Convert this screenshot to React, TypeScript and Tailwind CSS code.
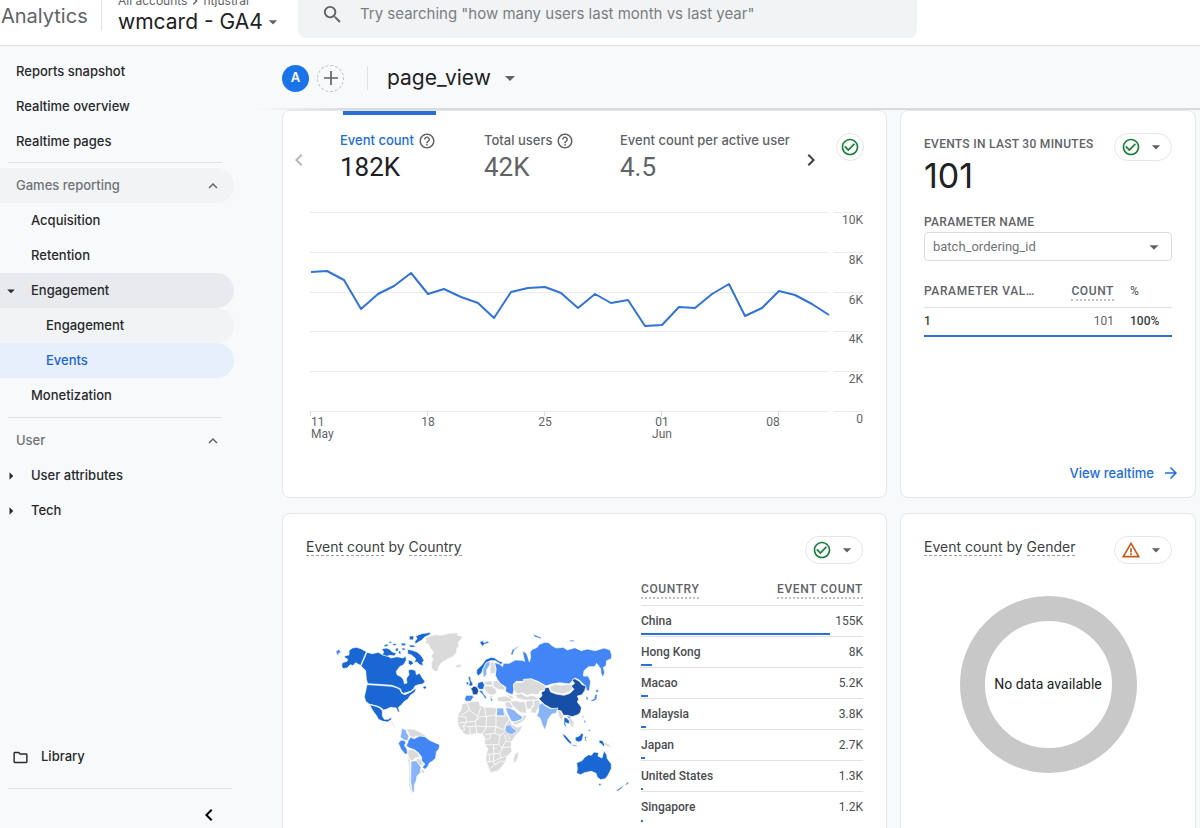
import type { ReactNode } from "react";
import {
  MdArrowDropDown,
  MdArrowForward,
  MdArrowRight,
  MdCheckCircleOutline,
  MdChevronLeft,
  MdChevronRight,
  MdExpandLess,
  MdHelpOutline,
  MdOutlineFolder,
  MdSearch,
  MdWarningAmber,
} from "react-icons/md";

const SANS = "font-['Inter',sans-serif]";
const ROBOTO = "font-['Roboto',sans-serif]";

function NavItem({ label, level = 0, state = "", caret }: { label: string; level?: number; state?: string; caret?: "down" | "right" }) {
  const pad = ["pl-4", "pl-[31px]", "pl-[46px]"][level];
  return (
    <a href="#" className={`relative flex h-[35px] items-center rounded-r-full ${pad} ${state}`}>
      {caret === "down" && <MdArrowDropDown className="absolute left-0.5 size-[18px]" />}
      {caret === "right" && <MdArrowRight className="absolute left-0.5 size-[18px]" />}
      {label}
    </a>
  );
}

function NavGroup({ label, state = "" }: { label: string; state?: string }) {
  return (
    <button type="button" aria-expanded="true" className={`flex h-[35px] w-full items-center justify-between rounded-r-full pr-3 pl-4 text-[#6f7378] ${state}`}>
      {label}
      <MdExpandLess className="size-[18px] text-[#5f6368]" />
    </button>
  );
}

function Sidebar() {
  return (
    <nav aria-label="Reports" className="flex w-[234px] shrink-0 flex-col pt-2 text-[13px] font-medium text-[#27292c]">
      <NavItem label="Reports snapshot" />
      <NavItem label="Realtime overview" />
      <NavItem label="Realtime pages" />
      <hr className="mx-2 mt-[3px] mb-[5px] w-[214px] border-[#dfe1e5]" />
      <NavGroup label="Games reporting" state="bg-[#f1f3f4]" />
      <NavItem label="Acquisition" level={1} />
      <NavItem label="Retention" level={1} />
      <NavItem label="Engagement" level={1} state="bg-[#e8eaed]" caret="down" />
      <NavItem label="Engagement" level={2} state="bg-[#f1f3f4]" />
      <NavItem label="Events" level={2} state="bg-[#e6effb] text-[#1a67d2]" />
      <NavItem label="Monetization" level={1} />
      <hr className="mx-2 mt-1 mb-[5px] w-[214px] border-[#dfe1e5]" />
      <NavGroup label="User" />
      <NavItem label="User attributes" level={1} caret="right" />
      <NavItem label="Tech" level={1} caret="right" />
      <div className="mt-auto">
        <a href="#" className="flex h-9 items-center gap-3 pl-3">
          <MdOutlineFolder className="size-[17px]" />
          Library
        </a>
        <div className="mt-[13px] mr-0.5 ml-2 flex h-10 items-center justify-end border-t border-[#dfe1e5] pt-3 pr-[11px]">
          <button type="button" aria-label="Collapse navigation">
            <MdChevronLeft className="size-6 text-black" />
          </button>
        </div>
      </div>
    </nav>
  );
}

function Header() {
  return (
    <header className="flex h-[46px] shrink-0 overflow-hidden border-b border-[#dfe1e5] bg-white">
      <div className="flex w-[298px] shrink-0">
        <a href="#" className="flex h-8 w-[101px] items-center pl-px text-[20px] text-[#5f6368]">Analytics</a>
        <div className="h-[31px] border-l border-[#dfe1e5]" />
        <button type="button" className="-mt-2 flex flex-col pl-4 text-left">
          <span className="flex h-[18px] items-center text-[12px] leading-4 text-[#5f6368]">
            All accounts <MdChevronRight className="size-4" /> ntjustrar
          </span>
          <span className="flex h-6 items-center text-[21px] whitespace-nowrap text-[#202124]">
            wmcard - GA4 <MdArrowDropDown className="size-5 text-[#5f6368]" />
          </span>
        </button>
      </div>
      <label className="flex h-[38px] w-[619px] items-center rounded-b-lg bg-[#f1f3f4] pb-[9px] pl-[23px] text-[#5f6368]">
        <MdSearch className="mr-4 size-[23px]" />
        <input
          type="search"
          aria-label="Search"
          placeholder={'Try searching "how many users last month vs last year"'}
          className="min-w-0 flex-1 bg-transparent text-[15px] outline-none placeholder:text-[#7a7e83]"
        />
      </label>
    </header>
  );
}

function Card({ children, label, className = "" }: { children: ReactNode; label: string; className?: string }) {
  return (
    <section aria-label={label} className={`rounded-lg border border-[#e3e6ea] bg-white ${className}`}>
      {children}
    </section>
  );
}

function StatusPill({ warning = false }: { warning?: boolean }) {
  return (
    <button type="button" aria-label={warning ? "Data warning" : "Data quality"} className="flex h-7 w-[58px] shrink-0 items-center justify-between rounded-full border border-[#e3e6ea] pr-[5px] pl-1.5">
      {warning ? <MdWarningAmber className="size-5 text-[#c5591b]" /> : <MdCheckCircleOutline className="size-5 text-[#188038]" />}
      <MdArrowDropDown className="size-5 text-[#5f6368]" />
    </button>
  );
}

const POINTS =
  "1,60 17,59 34,68 51,97 68,82 84,74 101,61 118,82 134,77 151,85 168,91 184,106 201,80 218,76 235,75 251,81 268,96 285,82 301,91 318,88 335,114 352,113 369,95 385,96 402,82 419,72 435,104 452,96 469,79 485,83 502,92 519,103";

const DAYS = [
  { x: 1, day: "11", month: "May", anchor: "start" as const },
  { x: 118, day: "18", month: "", anchor: "middle" as const },
  { x: 235, day: "25", month: "", anchor: "middle" as const },
  { x: 352, day: "01", month: "Jun", anchor: "middle" as const },
  { x: 463, day: "08", month: "", anchor: "middle" as const },
];

function LineChart() {
  return (
    <svg viewBox="0 0 554 232" role="img" aria-label="Event count per day" className={`mt-[25px] w-full ${ROBOTO}`} fontSize="12" fill="#5f6368">
      {["10K", "8K", "6K", "4K", "2K", "0"].map((tick, i) => (
        <g key={tick}>
          <path d={`M0 ${i * 40 + 0.5 - (i > 2 ? 1 : 0)}H519M524 ${i * 40 + 0.5 - (i > 2 ? 1 : 0)}H554`} stroke="#e8eaed" />
          <text x="553" y={i * 40 + 12 - (i > 2 ? 1 : 0)} textAnchor="end">{tick}</text>
        </g>
      ))}
      {[1, 118, 235, 352, 469].map((x) => (
        <path key={x} d={`M${x - 0.5} 199v5`} stroke="#dadce0" />
      ))}
      {DAYS.map((d) => (
        <g key={d.day} textAnchor={d.anchor}>
          <text x={d.x} y="214">{d.day}</text>
          <text x={d.x} y="226">{d.month}</text>
        </g>
      ))}
      <polyline points={POINTS} fill="none" stroke="#3273d6" strokeWidth="2" strokeLinejoin="round" />
    </svg>
  );
}

function Metric({ label, value, active = false, help = false, className = "" }: { label: string; value: string; active?: boolean; help?: boolean; className?: string }) {
  return (
    <button type="button" className={`flex shrink-0 flex-col text-left ${className}`}>
      <span className={`flex h-5 items-center gap-1 text-[13px] font-medium whitespace-nowrap ${active ? "text-[#1a6dd8]" : "text-[#5f6368]"}`}>
        {label}
        {help && <MdHelpOutline className="size-[18px] text-[#5f6368]" />}
      </span>
      <span className={`text-[26px] leading-8 ${ROBOTO} ${active ? "text-[#202124]" : "text-[#5f6368]"}`}>{value}</span>
    </button>
  );
}

function TrendCard() {
  return (
    <Card label="Event trend" className="h-[388px] pr-[22px] pl-[27px]">
      <div className="flex h-[76px]">
        <button type="button" aria-label="Previous metrics" className="mt-[22px] -ml-[23px] self-center">
          <MdChevronLeft className="size-6 text-[#b4b7bb]" />
        </button>
        <div className="ml-[29px] flex min-w-0 flex-1">
          <div className="w-[144px] shrink-0">
            <div className="ml-[3px] h-1 w-[93px] bg-[#2a6dd4]" />
            <Metric label="Event count" value="182K" active help className="mt-4" />
          </div>
          <Metric label="Total users" value="42K" help className="mt-5 w-[136px]" />
          <Metric label="Event count per active user" value="4.5" className="mt-5" />
        </div>
        <button type="button" aria-label="Next metrics" className="mt-[22px] mr-[13px] self-center">
          <MdChevronRight className="size-6 text-[#3c4043]" />
        </button>
        <button type="button" aria-label="Data quality" className="mt-[22px] flex size-7 items-center justify-center rounded-full border border-[#e3e6ea]">
          <MdCheckCircleOutline className="size-5 text-[#188038]" />
        </button>
      </div>
      <LineChart />
    </Card>
  );
}

function RealtimeCard() {
  return (
    <Card label="Events in last 30 minutes" className={`flex flex-col pr-[23px] pl-[23px] text-[12px] text-[#5f6368] ${ROBOTO}`}>
      <div className="mt-[22px] flex items-start justify-between">
        <div>
          <h2 className="mt-[3px] font-medium leading-4 tracking-wide whitespace-nowrap">EVENTS IN LAST 30 MINUTES</h2>
          <p className={`mt-0.5 text-[34px] leading-[44px] text-[#202124] ${SANS}`}>101</p>
        </div>
        <StatusPill />
      </div>
      <label htmlFor="parameter" className="mt-4 block font-medium leading-4 tracking-wide">PARAMETER NAME</label>
      <div className="relative mt-0.5">
        <select id="parameter" className="h-[29px] w-full appearance-none rounded-sm border border-[#dadce0] bg-white px-2 text-[13px] text-[#6f7378]">
          <option>batch_ordering_id</option>
        </select>
        <MdArrowDropDown className="pointer-events-none absolute top-1 right-[7px] size-[22px]" />
      </div>
      <table className="mt-[22px] w-full table-fixed">
        <thead>
          <tr className="h-6 border-b border-[#dfe1e5] align-top tracking-wider">
            <th scope="col" className="truncate text-left font-medium leading-4">PARAMETER VAL…</th>
            <th scope="col" className="w-[70px] text-right font-medium leading-4">
              <span className="inline-block border-b-2 border-dotted border-[#bdc1c6] leading-4">COUNT</span>
            </th>
            <th scope="col" className="w-[58px] pl-4 text-left font-medium leading-4">%</th>
          </tr>
        </thead>
        <tbody>
          <tr className="h-[29px] border-b-2 border-[#2a72d8]">
            <td className="font-medium text-[#3c4043]">1</td>
            <td className="text-right">101</td>
            <td className="pl-4 font-medium text-[#3c4043]">100%</td>
          </tr>
        </tbody>
      </table>
      <a href="#" className={`mt-auto -mr-2 mb-3.5 flex items-center gap-2 self-end text-[13px] font-medium text-[#1a6dd8] ${SANS}`}>
        View realtime <MdArrowForward className="size-[18px]" />
      </a>
    </Card>
  );
}

const NAVY = "#174ea6";
const DEEP = "#1967d2";
const BLUE = "#4285f4";
const LIGHT = "#8ab4f8";
const NONE = "#dadada";

const WEST: [string, string][] = [
  [DEEP, "M72 92L82 84 95 82 108 86 124 95 107 136 100 133 92 128 84 137 76 134 66 144 54 146 50 138 52 128 66 124 68 118 58 112 60 107 72 105Z"],
  [BLUE, "M33 94l9-6 6 9-8 4 2 8-7-6z"],
  [DEEP, "M126 97L142 101 160 97 172 104 184 106 198 114 216 110 234 114 242 108 244 120 236 134 224 140 214 154 216 164 228 170 236 180 238 191 246 189 244 176 252 164 250 150 260 148 272 152 274 164 284 160 292 174 300 184 294 192 280 194 270 198 266 206 256 214 236 220 230 216 226 206 212 200 200 196 160 193 128 191 124 178 122 152 108 138Z"],
  [DEEP, "M293 201l8-4 4 7-8 4z"],
  [DEEP, "M170 87l14-3 10 4 8 8 12 3-6 9-14-2-8 3-14-5 4-8z"],
  [DEEP, "M176 76l10-4 6 4-12 5zM193 64l8 1-2 5-7-1zM203 72l10-2 2 5-10 2zM211 84l9 1 0 9-8 0zM228 69l14 1 0 7-12 0zM219 92l8 2 1 10-7-4zM230 84l9 0 2 7-9-1zM253 48l14 0-2 12-12-1z"],
  [DEEP, "M252 75l14 0 6 6-16 1zM248 88L262 91 276 96 286 104 292 112 297 122 292 127 295 137 284 134 276 126 268 128 272 116 258 104 248 102Z"],
  [DEEP, "M250 120l10 2 6 9-10 5-6-6z"],
  [DEEP, "M269 66L276 56 272 48 290 41 318 37 314 44 298 52 290 61 280 66 272 72Z"],
  [NONE, "M298 55L314 49 330 44 348 46 372 40 402 38 396 45 414 50 408 58 400 68 402 80 396 84 394 98 384 110 366 118 350 128 342 138 338 154 328 154 320 144 318 130 324 118 318 108 326 98 314 82 310 72 298 68 306 60Z"],
  [NONE, "M390 137l14-4 8 4-10 6-10-1z"],
  [DEEP, "M126 194L160 196 200 199 214 203 224 208 230 220 240 224 256 217 268 208 274 204 270 216 256 226 248 238 238 244 230 254 220 262 224 277 218 275 214 264 196 262 184 268 176 270 166 262 156 258 132 252 122 244 118 230Z"],
  [DEEP, "M134 254L156 260 164 264 172 272 172 288 178 298 190 298 198 292 200 298 188 306 174 304 160 298 154 286 146 276 140 266Z"],
  [NONE, "M194 305l10 3 6 10 4 6-8-4-4-8-9-3z"],
  [LIGHT, "M230 325L244 330 246 340 252 348 248 362 236 360 226 352 228 340Z"],
  [NONE, "M244 326L268 328 284 336 298 344 304 350 290 350 274 348 262 354 252 346 250 338Z"],
  [BLUE, "M220 370L228 360 240 362 242 370 238 376 246 388 248 402 240 402 228 388Z"],
  [BLUE, "M250 362L256 352 268 356 284 348 300 350 312 360 344 374 342 386 334 396 332 414 322 424 314 428 308 440 300 448 292 442 300 432 290 424 290 412 282 400 270 390 254 384 244 378Z"],
  [NONE, "M250 390L264 388 280 400 284 412 270 414 264 422 254 420 248 402Z"],
  [NONE, "M278 414l10 4 4 10 2 8-8 2-12-14z"],
  [NONE, "M247 404L255 422 256 460 258 500 262 516 268 524 258 518 252 498 252 450Z"],
  [LIGHT, "M258 424L274 422 284 436 288 442 286 458 276 468 274 482 268 494 268 516 262 516 257 486Z"],
  [NONE, "M289 446l10 6-2 8-8-2z"],
];

const EAST: [string, string][] = [
  [DEEP, "M89 65l12-3 0 6 12-4 5 4-16 5-3 7-7-8z"],
  [BLUE, "M250 43l12 4 14 6-4 3-20-6zM358 61l14-1 0 5-12 0z"],
  [BLUE, "M182 104l4-14 14-9 10-4-16 12-6 16z"],
  [BLUE, "M138 148L134 128 148 132 158 140 160 130 178 130 196 120 216 121 224 124 220 108 218 94 228 98 234 112 238 126 242 112 240 96 248 88 262 82 266 74 284 67 296 68 304 76 318 84 340 82 352 90 374 83 394 92 412 87 436 92 462 84 480 90 485 104 484 116 470 122 468 138 460 142 464 158 459 172 453 160 452 146 440 130 434 140 416 140 402 152 400 168 414 168 422 184 418 212 410 212 406 198 388 180 374 174 366 184 358 192 330 188 304 192 288 198 264 184 244 178 224 184 198 184 190 194 192 208 188 224 176 220 166 214 168 202 150 190 142 178 136 166Z"],
  [DEEP, "M80 150L96 134 108 118 124 112 134 114 148 124 158 126 154 134 136 122 120 122 108 130 100 144 94 160 84 168 80 160Z"],
  [LIGHT, "M98 150L108 128 120 124 120 134 110 150 110 164 100 174Z"],
  [NONE, "M122 126L132 126 138 146 136 160 120 162 120 146Z"],
  [DEEP, "M54 170l7 0 2 12 6 10-2 6-12-1 4-9zM49 186l7 0-1 8-7 0z"],
  [DEEP, "M84 188L98 184 104 196 100 208 88 208 82 200Z"],
  [NAVY, "M62 206L72 198 82 202 86 212 82 224 68 224 66 212Z"],
  [BLUE, "M48 226L68 226 70 232 62 244 48 244 44 238Z"],
  [BLUE, "M86 212l10-2 6 12 8 10-4 6-8-14zM124 232l5 10-5 2-4-9z"],
  [NONE, "M102 186L116 182 128 184 128 196 106 196ZM130 182L142 182 152 192 166 202 164 210 144 208 128 198ZM102 198L126 198 138 208 140 220 126 226 116 222 104 210ZM116 226l12 2-2 7-6-2z"],
  [NONE, "M140 232L166 228 184 236 186 244 162 246 144 244ZM168 222l18 6 10 8-14 0z"],
  [NONE, "M190 194L198 188 222 186 220 178 244 176 264 186 288 198 284 210 270 214 264 224 244 222 232 226 216 218 200 222 192 208Z"],
  [NONE, "M196 224L212 220 230 230 246 226 262 232 264 240 240 240 222 240 200 234Z"],
  [NONE, "M298 200L316 192 332 196 358 192 372 200 360 214 340 222 318 218 304 212Z"],
  [NAVY, "M266 236L276 228 274 216 284 212 284 204 296 202 302 216 318 222 342 226 360 220 372 208 364 198 374 190 366 180 374 176 388 184 396 194 408 198 404 212 396 224 382 228 386 238 382 246 394 262 392 276 384 284 366 290 352 286 340 286 334 274 320 270 302 264 284 254 276 246Z"],
  [NONE, "M164 248L178 244 190 262 180 266 168 262ZM180 244L196 242 214 246 224 244 230 268 228 280 212 278 200 268 190 260ZM226 244L248 240 250 254 240 268 230 266ZM250 242L268 240 270 252 262 268 258 280 242 278 244 266 252 256Z"],
  [LIGHT, "M266 256L276 248 286 258 302 266 324 264 318 280 306 282 294 298 290 316 284 330 276 312 270 294 260 288 266 274Z"],
  [LIGHT, "M166 264L178 264 192 270 202 280 218 290 214 300 194 306 184 304 174 284Z"],
  [NONE, "M222 284l8 2-4 12-20 14-16 3 0-8 24-8z"],
  [NONE, "M322 272L332 272 340 290 336 302 328 292ZM354 298l8-6 10 16-2 12-6 2-4-12z"],
  [DEEP, "M342 292L350 294 358 302 358 312 346 308 350 326 342 314ZM352 288l10 2-2 5-6-1z"],
  [DEEP, "M336 340L346 346 364 366 364 374 354 366 342 352ZM366 374l14 2 2 3-14-1zM376 352L388 348 396 338 400 344 396 362 386 366 376 362ZM404 350l8-1-4 6 2 10-5-4z"],
  [BLUE, "M402 300l6 2-2 8-4-3zM416 328l6 2-2 5-5-2zM396 288l4-2 0 8-3-1z"],
  [BLUE, "M437 210l7-2 2 7-8 3zM436 222l6 2-2 14-10 6-12 0 14-8zM408 228l6 4 0 10-6-4z"],
  [DEEP, "M448 360l10 2 6 12-2 6-8-8-7-4z"],
  [NONE, "M463 366l12 6 12 10-10-1-13-5zM484 368l8 3-3 4z"],
  [DEEP, "M380 428L396 422 404 412 416 404 424 406 432 396 446 398 444 408 456 414 462 392 470 404 472 416 484 432 484 446 474 466 466 476 452 479 442 472 438 460 424 454 404 458 392 464 380 460 382 446Z"],
  [DEEP, "M446 490l8 1-3 7-4-2z"],
  [BLUE, "M498 512l10-8 12-8-2 6-14 12zM524 496l8-10 6 0-6 8z"],
  [NONE, "M36 252L52 248 70 244 86 244 90 256 104 262 124 262 138 264 162 264 166 280 178 298 186 314 202 322 218 316 210 334 194 350 184 366 184 384 186 394 172 408 166 426 154 442 144 452 122 458 116 444 108 422 108 402 114 388 104 372 104 352 96 342 80 340 60 344 46 344 32 330 22 310 24 284 34 268Z"],
  [LIGHT, "M140 264L160 264 164 288 140 288Z"],
  [LIGHT, "M168 316L182 314 188 324 202 332 186 344 172 340 164 330Z"],
  [NONE, "M190 418L194 404 206 394 204 412 196 428 190 426Z"],
];

const AFRICA_BORDERS =
  "M52 248L58 270 34 286M58 270L84 290 92 262M24 288L48 292 50 306 22 310M84 290L76 304 50 306 40 318 44 330 34 332M76 304L78 318 60 320 60 344M40 318L60 320M78 318L80 340M104 262L108 290 92 290 76 304M108 290L138 284 138 320 110 320 96 342M138 284L140 264M110 290L108 320 80 318M138 288L166 288M138 320L164 330 166 316 178 298M138 320L134 340 104 344M134 340L150 346 164 338M150 346L146 374 104 374M104 358L120 356 120 340M146 374L156 384 184 380M164 344L168 362 184 366M168 362L156 384 150 400 110 404M130 374L132 402 130 424 110 426M150 400L152 414 130 424 134 434 152 424 166 424M152 414L170 408M118 404L118 426M140 384L128 386M172 344L180 358M134 434L122 444";

function WorldMap() {
  return (
    <svg viewBox="0 0 930 540" role="img" aria-label="Event count by country" className="w-[310px]" stroke="#fff" strokeWidth="2" strokeLinejoin="round">
      {WEST.map(([fill, d]) => (
        <path key={d} fill={fill} d={d} />
      ))}
      <g transform="translate(375 0)">
        {EAST.map(([fill, d]) => (
          <path key={d} fill={fill} d={d} />
        ))}
        <path d={AFRICA_BORDERS} fill="none" strokeWidth="2.5" />
      </g>
    </svg>
  );
}

const COUNTRIES = [
  { name: "China", count: "155K", share: 85 },
  { name: "Hong Kong", count: "8K", share: 4.8 },
  { name: "Macao", count: "5.2K", share: 3 },
  { name: "Malaysia", count: "3.8K", share: 2.2 },
  { name: "Japan", count: "2.7K", share: 1.6 },
  { name: "United States", count: "1.3K", share: 0.8 },
  { name: "Singapore", count: "1.2K", share: 0.7 },
];

function CardTitle({ dimension }: { dimension: string }) {
  return (
    <h2 className="mt-0.5 text-[14px] leading-[17px] text-[#3c4043]">
      <span className="inline-block border-b border-dashed border-[#9aa0a6]">Event count</span> by{" "}
      <span className="inline-block border-b border-dashed border-[#9aa0a6]">{dimension}</span>
    </h2>
  );
}

function CountryCard() {
  return (
    <Card label="Event count by Country" className="h-[400px] overflow-hidden pt-[22px] pr-[23px] pl-[23px]">
      <div className="flex items-start justify-between">
        <CardTitle dimension="Country" />
        <StatusPill />
      </div>
      <div className="mt-4 flex justify-between">
        <div className="mt-10 ml-[19px] shrink-0">
          <WorldMap />
        </div>
        <table className={`w-[222px] shrink-0 self-start text-[12px] text-[#4a4d51] ${ROBOTO}`}>
          <thead>
            <tr className="h-[25px] border-b border-[#dfe1e5] align-top tracking-wider text-[#5f6368]">
              <th scope="col" className="text-left font-medium">
                <span className="inline-block border-b-2 border-dotted border-[#bdc1c6] leading-4">COUNTRY</span>
              </th>
              <th scope="col" className="text-right font-medium">
                <span className="inline-block border-b-2 border-dotted border-[#bdc1c6] leading-4">EVENT COUNT</span>
              </th>
            </tr>
          </thead>
          <tbody>
            {COUNTRIES.map((c) => (
              <tr key={c.name} className="relative h-[31px] border-b border-[#dfe1e5] last:border-b-0">
                <th scope="row" className="text-left font-medium">
                  {c.name}
                  <span className="absolute bottom-0 left-0 h-0.5 bg-[#2a72d8]" style={{ width: `${c.share}%` }} />
                </th>
                <td className="text-right">{c.count}</td>
              </tr>
            ))}
          </tbody>
        </table>
      </div>
    </Card>
  );
}

function GenderCard() {
  return (
    <Card label="Event count by Gender" className="pt-[22px] pr-[23px] pl-[23px]">
      <div className="flex items-start justify-between">
        <CardTitle dimension="Gender" />
        <StatusPill warning />
      </div>
      <div className={`mx-auto mt-8 flex size-[177px] items-center justify-center rounded-full border-[25px] border-[#c8c8c8] text-[14px] whitespace-nowrap text-[#202124] ${ROBOTO}`}>
        No data available
      </div>
    </Card>
  );
}

export default function App() {
  return (
    <div className={`flex h-screen flex-col overflow-hidden bg-[#f8f9fb] ${SANS}`}>
      <Header />
      <div className="flex min-h-0 flex-1">
        <Sidebar />
        <main className="flex min-w-0 flex-1 flex-col">
          <div className="flex h-[62px] shrink-0 items-center pt-0.5 pl-12">
            <span className="flex size-[27px] items-center justify-center rounded-full bg-[#1a73e8] text-[13px] font-semibold text-white">A</span>
            <button type="button" aria-label="Add comparison" className="ml-2 flex size-[27px] items-center justify-center rounded-full border border-dashed border-[#bdc1c6] text-[#5f6368]">
              <svg viewBox="0 0 14 14" className="size-3.5" stroke="currentColor" strokeWidth="1.7">
                <path d="M7 0v14M0 7h14" />
              </svg>
            </button>
            <div className="ml-[23px] h-6 border-l border-[#dfe1e5]" />
            <button type="button" className="ml-[19px] flex items-center gap-[7px] text-[21px] text-[#202124]">
              page_view <MdArrowDropDown className="size-6 text-[#5f6368]" />
            </button>
          </div>
          <div className="ml-5 h-0.5 shrink-0 bg-linear-to-r from-transparent to-[#d9dbde] to-10%" />
          <div className="grid min-h-0 flex-1 auto-rows-max grid-cols-[minmax(0,1fr)_296px] gap-x-[13px] gap-y-[15px] overflow-hidden pr-1 pl-12">
            <TrendCard />
            <RealtimeCard />
            <CountryCard />
            <GenderCard />
          </div>
        </main>
      </div>
    </div>
  );
}
